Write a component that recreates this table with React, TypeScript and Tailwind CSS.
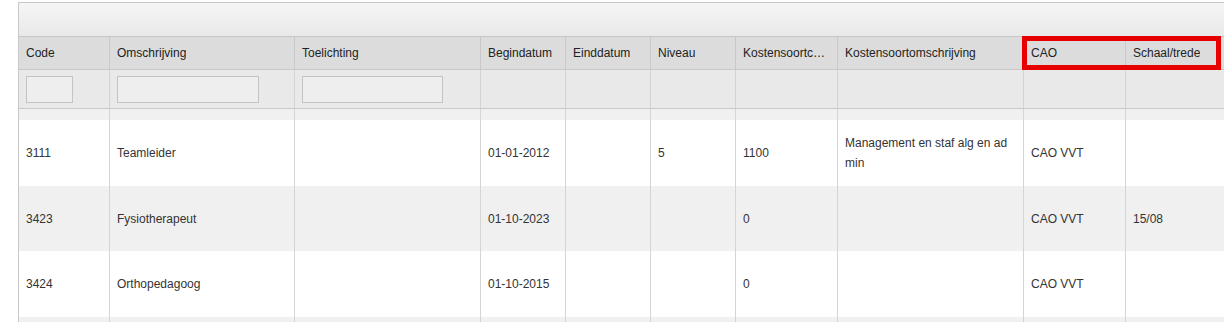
import React from 'react';

type Col = { key: string; label: string; width: string; filter?: string };

const COLUMNS: Col[] = [
  { key: 'code', label: 'Code', width: 'w-[91px]', filter: 'w-[47px]' },
  { key: 'oms', label: 'Omschrijving', width: 'w-[185px]', filter: 'w-[142px]' },
  { key: 'toel', label: 'Toelichting', width: 'w-[186px]', filter: 'w-[141px]' },
  { key: 'begin', label: 'Begindatum', width: 'w-[85px]' },
  { key: 'eind', label: 'Einddatum', width: 'w-[85px]' },
  { key: 'niveau', label: 'Niveau', width: 'w-[85px]' },
  { key: 'ksc', label: 'Kostensoortcode', width: 'w-[102px]' },
  { key: 'kso', label: 'Kostensoortomschrijving', width: 'w-[186px]' },
  { key: 'cao', label: 'CAO', width: 'w-[102px]' },
  { key: 'schaal', label: 'Schaal/trede', width: 'w-[130px]' },
];

type Row = Record<string, string>;

const ROWS: Row[] = [
  {
    code: '3111',
    oms: 'Teamleider',
    begin: '01-01-2012',
    niveau: '5',
    ksc: '1100',
    kso: 'Management en staf alg en ad min',
    cao: 'CAO VVT',
  },
  { code: '3423', oms: 'Fysiotherapeut', begin: '01-10-2023', ksc: '0', cao: 'CAO VVT', schaal: '15/08' },
  { code: '3424', oms: 'Orthopedagoog', begin: '01-10-2015', ksc: '0', cao: 'CAO VVT' },
];

const ROW_STYLES = ['h-[66px] bg-white', 'h-[65px] bg-[#f0f0f0]', 'h-[66px] bg-white'];

export default function App() {
  return (
    <div
      className="w-[1224px] h-[322px] overflow-hidden bg-white text-[12px] text-[#333]"
      style={{ fontFamily: '"Liberation Sans", Arial, sans-serif' }}
    >
      <div className="relative ml-[18px] mt-[2px] w-[1260px] border-l border-[#c8c8c8]">
        {/* Toolbar */}
        <div className="h-[35px] border-t border-b border-[#c8c8c8] bg-gradient-to-b from-[#f5f5f5] to-[#e9e9e9]" />

        {/* Header */}
        <div className="flex h-[33px] border-b border-[#c8c8c8] bg-[#dcdcdc] text-[#222]">
          {COLUMNS.map((c) => (
            <div
              key={c.key}
              className={`${c.width} shrink-0 flex items-center pl-[7px] pr-2 border-r border-[#c8c8c8] overflow-hidden`}
            >
              <span className="truncate">{c.label}</span>
            </div>
          ))}
        </div>

        {/* Filter row */}
        <div className="flex h-[39px] border-b border-[#c8c8c8] bg-[#e9e9e9]">
          {COLUMNS.map((c) => (
            <div key={c.key} className={`${c.width} shrink-0 flex items-center pl-[7px] border-r border-[#d4d4d4]`}>
              {c.filter && (
                <input
                  className={`${c.filter} h-[27px] border border-[#c4c4c4] bg-[#eeeeee] outline-none`}
                  readOnly
                />
              )}
            </div>
          ))}
        </div>

        {/* Body */}
        <div className="flex h-[11px] bg-[#f0f0f0]">
          {COLUMNS.map((c) => (
            <div key={c.key} className={`${c.width} shrink-0 border-r border-[#d4d4d4]`} />
          ))}
        </div>
        {ROWS.map((r, i) => (
          <div key={i} className={`flex ${ROW_STYLES[i]}`}>
            {COLUMNS.map((c) => (
              <div
                key={c.key}
                className={`${c.width} shrink-0 flex items-center pl-[7px] pr-2 border-r border-[#d4d4d4] leading-5`}
              >
                {r[c.key] ?? ''}
              </div>
            ))}
          </div>
        ))}
        <div className="flex h-[20px] bg-[#f0f0f0]">
          {COLUMNS.map((c) => (
            <div key={c.key} className={`${c.width} shrink-0 border-r border-[#d4d4d4]`} />
          ))}
        </div>

        {/* Highlight around CAO + Schaal/trede headers */}
        <div className="absolute left-[1003px] top-[34px] w-[199px] h-[34px] border-[5px] border-[#e60000]" />
      </div>
    </div>
  );
}
